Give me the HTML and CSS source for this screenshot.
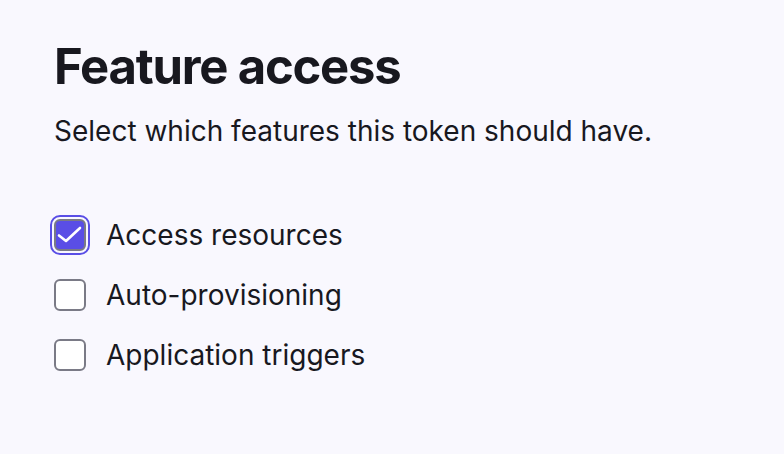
FILE: index.html
```html
<!DOCTYPE html>
<html lang="en">
<head>
<meta charset="utf-8">
<link rel="stylesheet" href="styles.css">
</head>
<body>
<main class="panel">
  <h1 class="title">Feature access</h1>
  <p class="desc">Select which features this token should have.</p>
  <div class="options">
    <label class="option">
      <span class="box checked focus">
        <svg viewBox="0 0 28 28" width="28" height="28"><path d="M3 14.5l7 5.5 14-13" fill="none" stroke="#fff" stroke-width="2.6" stroke-linecap="round" stroke-linejoin="round"/></svg>
      </span>
      <span class="label">Access resources</span>
    </label>
    <label class="option">
      <span class="box"></span>
      <span class="label">Auto-provisioning</span>
    </label>
    <label class="option">
      <span class="box"></span>
      <span class="label">Application triggers</span>
    </label>
  </div>
</main>
</body>
</html>
```
FILE: styles.css
```css
html, body {
  margin: 0;
  padding: 0;
  background: #f9f8fe;
}
body {
  font-family: Inter, "Noto Sans", sans-serif;
  color: #18181f;
}
.panel {
  padding: 37px 54px;
}
.title {
  margin: 0;
  font-size: 49px;
  font-weight: 700;
  letter-spacing: -0.025em;
  line-height: 60px;
}
.desc {
  margin: 14px 0 0;
  font-size: 28px;
  line-height: 40px;
}
.options {
  margin-top: 68px;
  display: flex;
  flex-direction: column;
  gap: 28px;
}
.option {
  display: flex;
  align-items: center;
  gap: 20px;
}
.box {
  box-sizing: border-box;
  width: 32px;
  height: 32px;
  border: 2px solid #7a7a86;
  border-radius: 6px;
  background: #fff;
  display: flex;
  align-items: center;
  justify-content: center;
  flex: none;
}
.box.checked {
  background: #5a4ee6;
}
.box.focus {
  outline: 2px solid #5a4ee6;
  outline-offset: 2px;
}
.label {
  font-size: 28px;
  line-height: 32px;
}
```
